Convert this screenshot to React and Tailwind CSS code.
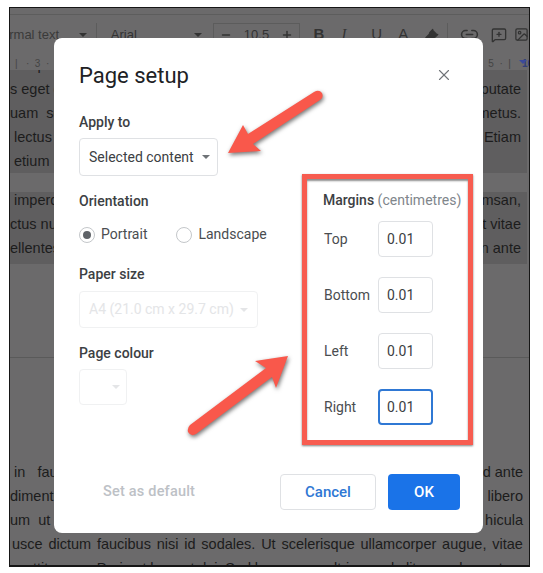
import { Image, Link2, MessageSquarePlus, Minus, Plus, X, Highlighter } from "lucide-react";

const sans = "font-['Roboto','Liberation_Sans',sans-serif]";

// justified fragments of the document text that show either side of the dialog
const topLines = [
    ["o imper", "n sed"],
    ["s eget g", "putate"],
    ["uam  se", "metus."],
    [" lectus", "Etiam"],
    [" etium ni", ""],
];
const midLines = [
    [" imperd", "msan,"],
    ["ctus nu", "t vitae"],
    ["ellentes", "n ante"],
];
const lowLines = [
    [" in   fauc", "d ante"],
    ["dimentu", "libero"],
    ["um  ut  c", "hicula"],
];

function DocLine({ left, right }) {
    return (
        <div className="flex h-[24px] items-center justify-between pr-[6px] whitespace-pre">
            <span>{left}</span>
            <span>{right}</span>
        </div>
    );
}

function FullLine({ text }) {
    return (
        <div className="flex h-[24px] items-center justify-between pr-[6px] pl-[2px] whitespace-nowrap">
            {text.split(" ").map((w) => (
                <span key={w}>{w}</span>
            ))}
        </div>
    );
}

function Field({ label, active }) {
    return (
        <div className="flex h-[36px] items-center justify-between">
            <span className="text-[14px] text-[#4a4d50]">{label}</span>
            <div
                className={
                    active
                        ? "flex h-[36px] w-[55px] items-center rounded border-2 border-[#2f78d4] pl-[7px] text-[14px] text-[#3c4043]"
                        : "flex h-[36px] w-[55px] items-center rounded border border-[#dfe1e4] pl-[8px] text-[14px] text-[#3c4043]"
                }
            >
                0.01
            </div>
        </div>
    );
}

function Caret({ color }) {
    return <div className={"h-0 w-0 border-x-[4px] border-t-[4px] border-x-transparent " + color} />;
}

function Heading({ children }) {
    return <div className="text-[14px] leading-[20px] font-medium text-[#3c4043]">{children}</div>;
}

function Radio({ checked, label }) {
    return (
        <div className="flex items-center gap-[6px]">
            <div className="flex h-[16px] w-[16px] items-center justify-center rounded-full border border-[#c4c7ca]">
                {checked && <div className="h-[8px] w-[8px] rounded-full bg-[#5f6368]" />}
            </div>
            <span className="text-[14px] text-[#4a4d50]">{label}</span>
        </div>
    );
}

export default function App() {
    return (
        <div className={"relative h-[573px] w-[543px] overflow-hidden bg-white pt-[7px] pl-[9px] " + sans}>
            <div className="relative flex h-[560px] w-[521px] flex-col overflow-hidden border border-b-2 border-[#161616] bg-[#6b6a6b] font-['Liberation_Sans',sans-serif] text-[14.5px] text-[#1c1c1c]">
                <div className="h-[7px] shrink-0 border-b border-[#5d5d5d]" />
                {/* toolbar */}
                <div className="flex h-[39px] shrink-0 items-center text-[13px] text-[#333]">
                    <span className="ml-[-8px] w-[77px] whitespace-nowrap text-[#3a3a3a]">ormal text</span>
                    <Caret color="border-t-[#333]" />
                    <div className="ml-[9px] h-[24px] w-px bg-[#5c5c5c]" />
                    <span className="ml-[14px] w-[83px]">Arial</span>
                    <Caret color="border-t-[#333]" />
                    <div className="ml-[11px] flex h-[24px] w-[88px] items-center justify-between border border-[#5c5c5c] px-[6px]">
                        <Minus size={12} strokeWidth={3} />
                        <span>10.5</span>
                        <Plus size={12} strokeWidth={3} />
                    </div>
                    <span className="ml-[13px] w-[28px] text-[15px] font-bold">B</span>
                    <span className="w-[30px] font-['Liberation_Serif',serif] text-[15px] italic">I</span>
                    <span className="w-[27px] text-[15px]">U</span>
                    <span className="w-[26px] text-[15px]">A</span>
                    <Highlighter size={15} fill="#333" />
                    <div className="ml-[8px] h-[24px] w-px bg-[#5c5c5c]" />
                    <Link2 className="ml-[12px]" size={19} />
                    <MessageSquarePlus className="ml-[12px]" size={16} />
                    <Image className="ml-[7px]" size={15} />
                </div>
                {/* ruler */}
                <div className="flex h-[16px] shrink-0 items-center justify-between pt-[2px] pl-[5px] text-[10px] whitespace-pre text-[#444]">
                    <span>|   ·  3  ·   |</span>
                    <span className="flex items-center gap-[11px]">
                        <span>5  ·  |</span>
                        <span className="relative mr-[-4px] font-bold text-[#33407a]">
                            16
                            <span className="absolute top-[4px] left-[-3px]">
                                <Caret color="border-t-[#3b4a9c]" />
                            </span>
                        </span>
                    </span>
                </div>
                {/* document */}
                <div className="flex flex-col">
                    <div className="mr-[2px] h-[103px] overflow-hidden bg-[#5f5e5f]">
                        <div className="mt-[-16px]">
                            {topLines.map((l, i) => (
                                <DocLine key={i} left={l[0]} right={l[1]} />
                            ))}
                        </div>
                    </div>
                    <div className="h-[19px]" />
                    <div className="mr-[2px] h-[72px] bg-[#5f5e5f]">
                        <div className="mt-[-3px]">
                            {midLines.map((l, i) => (
                                <DocLine key={i} left={l[0]} right={l[1]} />
                            ))}
                        </div>
                    </div>
                    <div className="h-[94px] border-b border-[#5a5a5a]" />
                    <div className="h-[103px]" />
                    {lowLines.map((l, i) => (
                        <DocLine key={i} left={l[0]} right={l[1]} />
                    ))}
                    <FullLine text="usce dictum faucibus nisi id sodales. Ut scelerisque ullamcorper augue, vitae" />
                    <FullLine text="porttitor non. Proin at laoreet dui. Sed leo augue, ultrices vel elit nec, elementum" />
                </div>
            </div>

            {/* dialog */}
            <div className="absolute top-[38px] left-[54px] flex h-[495px] w-[429px] flex-col rounded-lg bg-white pt-[23px] pr-[31px] pl-[25px]">
                <div className="flex h-[28px] items-center justify-between">
                    <h1 className="text-[22px] text-[#202124]">Page setup</h1>
                    <X size={18} strokeWidth={1.5} className="mr-[-1px] text-[#6f7377]" />
                </div>
                <div className="mt-[23px] flex flex-1">
                    <div className="flex w-[244px] flex-col">
                        <Heading>Apply to</Heading>
                        <div className="mt-[6px] flex h-[38px] w-[139px] items-center gap-[8px] rounded border border-[#dfe1e4] pl-[9px] text-[14px] text-[#3c4043]">
                            Selected content
                            <Caret color="border-t-[#6f7377]" />
                        </div>
                        <div className="mt-[15px]">
                            <Heading>Orientation</Heading>
                        </div>
                        <div className="mt-[13px] flex gap-[29px]">
                            <Radio checked label="Portrait" />
                            <Radio label="Landscape" />
                        </div>
                        <div className="mt-[19px]">
                            <Heading>Paper size</Heading>
                        </div>
                        <div className="mt-[7px] flex h-[37px] w-[179px] items-center gap-[6px] rounded border border-[#f0f1f2] pl-[9px] text-[14px] text-[#e4e5e7]">
                            A4 (21.0 cm x 29.7 cm)
                            <Caret color="border-t-[#e4e5e7]" />
                        </div>
                        <div className="mt-[15px]">
                            <Heading>Page colour</Heading>
                        </div>
                        <div className="mt-[6px] flex h-[36px] w-[48px] items-center justify-end rounded border border-[#f0f1f2] pr-[6px]">
                            <Caret color="border-t-[#e4e5e7]" />
                        </div>
                    </div>
                    <div className="flex w-[110px] flex-col">
                        <div className="mt-[78px] text-[14px] leading-[20px] whitespace-nowrap">
                            <span className="font-medium text-[#3c4043]">Margins</span>{" "}
                            <span className="text-[#80868b]">(centimetres)</span>
                        </div>
                        <div className="mt-[11px] flex flex-col gap-[20px] pl-[1px]">
                            <Field label="Top" />
                            <Field label="Bottom" />
                            <Field label="Left" />
                            <Field label="Right" active />
                        </div>
                    </div>
                </div>
                <div className="mb-[23px] flex items-center">
                    <span className="ml-[24px] text-[14.5px] font-medium tracking-[0.2px] text-[#bdc1c6]">Set as default</span>
                    <div className="ml-auto flex h-[36px] w-[96px] items-center justify-center rounded border border-[#dfe1e4] text-[15px] font-medium text-[#2f78d4]">
                        Cancel
                    </div>
                    <div className="mr-[-8px] ml-[12px] flex h-[36px] w-[72px] items-center justify-center rounded bg-[#1a73e8] text-[15px] font-medium text-white">
                        OK
                    </div>
                </div>
            </div>

            {/* annotation: red box round the margins */}
            <div className="absolute top-[174px] left-[302px] h-[271px] w-[171px] border-[5px] border-[#f75c50] shadow-[0_1px_2px_rgba(0,0,0,0.5),inset_0_2px_2px_rgba(0,0,0,0.45)]" />

            {/* annotation: arrows */}
            <svg className="absolute top-0 left-0 drop-shadow-[1px_2px_2px_rgba(0,0,0,0.55)]" width="543" height="573" fill="#f9584b">
                <path d="M228 153 L243 125 L248 134 L314 92 Q319 89 322 93 Q324 98 320 100 L253 144 L261 151 Z" />
                <path d="M288 356 L276 388 L272 377 L196 434 Q191 437 188 432 Q187 428 190 425 L266 368 L255 361 Z" />
            </svg>
        </div>
    );
}
